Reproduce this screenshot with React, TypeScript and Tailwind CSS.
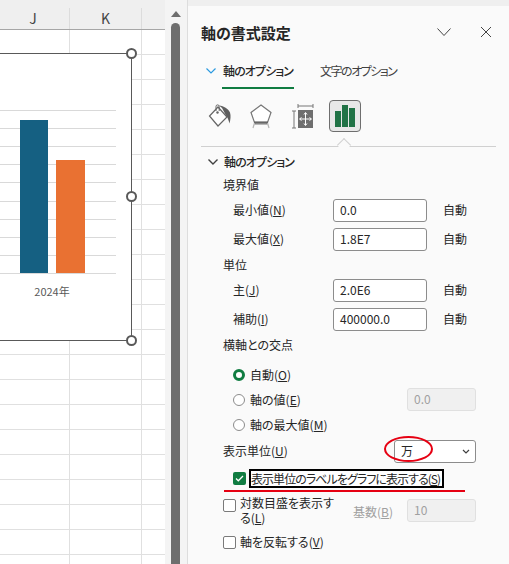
import type { ReactNode } from "react";

const gridLines = [0, 1, 2, 3, 4, 5, 6, 7, 8, 9];
const sheetRows = Array.from({ length: 22 }, (_, i) => i);

function Handle({ className }: { className: string }) {
  return (
    <div
      className={`absolute h-[11px] w-[11px] rounded-full border-2 border-[#595959] bg-white ${className}`}
    />
  );
}

function Sheet() {
  return (
    <div className="relative h-full w-[165px] shrink-0 overflow-hidden bg-white">
      <div className="flex h-[30px] border-b border-[#a6a6a6] bg-[#efefef] pt-[8px] text-[14px] leading-[20px] text-[#444444]">
        <div className="w-[70px] border-r border-[#dcdcdc] pr-[3px] text-center">J</div>
        <div className="w-[72px] border-r border-[#dcdcdc] text-center">K</div>
      </div>
      {sheetRows.map((i) => (
        <div key={i} className="flex h-[25px] border-b border-[#e0e0e0]">
          <div className="w-[70px] border-r border-[#e0e0e0]" />
          <div className="w-[72px] border-r border-[#e0e0e0]" />
        </div>
      ))}
      <div className="absolute left-[-10px] top-[53px] h-[288px] w-[142px] border border-[#595959] bg-white">
        <div className="absolute left-[9px] top-[56px] flex h-[164px] w-[116px] flex-col justify-between">
          {gridLines.map((i) => (
            <div key={i} className="h-px bg-[#d9d9d9]" />
          ))}
          <div className="absolute bottom-[1px] left-[20px] h-[153px] w-[28px] bg-[#156082]" />
          <div className="absolute bottom-[1px] left-[56px] h-[113px] w-[29px] bg-[#e97132]" />
        </div>
        <div className="absolute left-[9px] top-[229px] w-[104px] text-center text-[11px] leading-[16px] text-[#595959]">
          2024年
        </div>
      </div>
      <Handle className="left-[126px] top-[48px]" />
      <Handle className="left-[126px] top-[191px]" />
      <Handle className="left-[126px] top-[335px]" />
    </div>
  );
}

function ScrollBar() {
  return (
    <div className="flex h-full w-[23px] shrink-0 flex-col items-center border-r border-[#dddddd] bg-[#f4f4f4] pr-[1px] pt-[11px]">
      <div className="h-0 w-0 border-x-[5px] border-b-[6px] border-x-transparent border-b-[#6e6e6e]" />
      <div className="mt-[6px] w-[9px] flex-1 rounded-t-[5px] bg-[#6e6e6e]" />
    </div>
  );
}

function Label({ children, className = "" }: { children: ReactNode; className?: string }) {
  return <div className={`whitespace-nowrap text-[12px] leading-[20px] text-[#262626] ${className}`}>{children}</div>;
}

function ValueRow({ label, value, className }: { label: ReactNode; value: string; className: string }) {
  return (
    <div className={`flex h-[23px] items-center ${className}`}>
      <Label className="w-[110px] pb-[1px] pl-[10px]">{label}</Label>
      <div className="flex h-[23px] w-[94px] items-center rounded-[3px] border border-[#8c8c8c] bg-white pb-[2px] pl-[6px] text-[12px] text-[#262626]">
        {value}
      </div>
      <Label className="ml-[16px] pb-[1px]">自動</Label>
    </div>
  );
}

function Radio({ checked }: { checked?: boolean }) {
  return checked ? (
    <div className="h-[12px] w-[12px] shrink-0 rounded-full border-[3px] border-[#107c41] bg-white" />
  ) : (
    <div className="h-[12px] w-[12px] shrink-0 rounded-full border border-[#8c8c8c] bg-white" />
  );
}

function Checkbox() {
  return <div className="h-[13px] w-[13px] shrink-0 rounded-[2px] border border-[#7a7a7a] bg-white" />;
}

function DisabledInput({ value }: { value: string }) {
  return (
    <div className="flex h-[23px] w-[69px] shrink-0 items-center rounded-[3px] border border-[#e0e0e0] bg-[#f0f0f0] pb-[2px] pl-[6px] text-[12px] text-[#a0a0a0]">
      {value}
    </div>
  );
}

function BucketIcon() {
  return (
    <svg width="26" height="26" viewBox="0 0 26 26" fill="none">
      <path d="M11 4 2.5 13 11 23 20 14Z" stroke="#666666" strokeWidth="1.2" fill="#ffffff" />
      <path d="M9 8V3.5a1.6 1.6 0 0 1 3.2 0V8" stroke="#666666" strokeWidth="1" />
      <circle cx="10.5" cy="9.5" r="1.2" fill="#666666" />
      <path d="M12 2.5c5 .5 9 3 11 7 1 3 .5 7-.5 11-1-3-1.500-6-3.500-8L15 5Z" fill="#5f5f5f" />
    </svg>
  );
}

function PentagonIcon() {
  return (
    <svg width="24" height="26" viewBox="0 0 24 26" fill="none">
      <path d="M12 2 22 9.500 18 21H6L2 9.500Z" stroke="#777777" strokeWidth="1.2" fill="#ffffff" />
      <path d="M5 19.500h14" stroke="#666666" strokeWidth="2.200" />
      <path d="m5.500 20-1.500 5M18.500 20l1.500 5" stroke="#b5b5b5" strokeWidth="1.200" />
    </svg>
  );
}

function SizeIcon() {
  return (
    <svg width="24" height="26" viewBox="0 0 24 26" fill="none">
      <path d="M7 1v4M22 1v4M7 3h15M1 8h4M1 25h4M3 8v17" stroke="#777777" strokeWidth="1" />
      <rect x="7" y="7" width="15" height="18" fill="#6e6e6e" />
      <path d="M14.500 10v12M9 16h11" stroke="#ffffff" strokeWidth="1" />
      <path d="m13 11.500 1.500-2 1.500 2M13 20.500l1.500 2 1.500-2M10.500 14.500l-2 1.500 2 1.500M18.500 14.500l2 1.500-2 1.500" stroke="#ffffff" strokeWidth="1" />
    </svg>
  );
}

function BarsIcon() {
  return (
    <svg width="20" height="22" viewBox="0 0 20 22">
      <rect x="0" y="6" width="6" height="16" fill="#217346" />
      <rect x="7" y="0" width="6" height="22" fill="#217346" />
      <rect x="14" y="3" width="6" height="19" fill="#217346" />
    </svg>
  );
}

function Panel() {
  return (
    <div className="mt-[6px] h-[558px] flex-1 overflow-hidden bg-[#fafafa] pl-[13px] pr-[13px]">
      <div className="mt-[15px] flex h-[24px] items-center">
        <div className="flex-1 text-[15px] font-semibold leading-[24px] text-[#262626]">軸の書式設定</div>
        <svg width="16" height="10" viewBox="0 0 16 10" fill="none" className="mb-[3px]">
          <path d="M1.500 1.500 8 8.500l6.500-7" stroke="#444444" strokeWidth="1" />
        </svg>
        <svg width="12" height="12" viewBox="0 0 12 12" fill="none" className="mb-[3px] ml-[28px] mr-[4px]">
          <path d="m1 1 10 10M11 1 1 11" stroke="#444444" strokeWidth="1" />
        </svg>
      </div>

      <div className="mt-[10px] flex h-[34px] items-start pl-[5px]">
        <svg width="10" height="6" viewBox="0 0 10 6" fill="none" className="mt-[13px]">
          <path d="M.5.500 5 5 9.500.500" stroke="#2b9ae0" strokeWidth="1.200" />
        </svg>
        <div className="ml-[6px] flex h-[34px] w-[72px] flex-col whitespace-nowrap border-b-2 border-[#107c41] pt-[6px] text-center text-[12px] font-medium leading-[20px] tracking-[-0.9px] text-[#262626]">
          軸のオプション
        </div>
        <div className="ml-[26px] whitespace-nowrap pt-[6px] text-[12px] leading-[20px] tracking-[-1.5px] text-[#404040]">
          文字のオプション
        </div>
      </div>

      <div className="mt-[11px] flex h-[32px] items-center pl-[6px]">
        <BucketIcon />
        <div className="ml-[16px]"><PentagonIcon /></div>
        <div className="ml-[18px]"><SizeIcon /></div>
        <div className="ml-[14px] flex h-[32px] w-[32px] items-center justify-center rounded-[4px] border border-[#6e6e6e] bg-[#e8e8e8]">
          <BarsIcon />
        </div>
      </div>

      <div className="relative mt-[14px] h-px w-[295px] bg-[#d0d0d0]">
        <div className="absolute left-[138px] top-[-6px] h-[10px] w-[10px] rotate-45 border-l border-t border-[#d0d0d0] bg-[#fafafa]" />
      </div>

      <div className="mt-[5px] flex h-[20px] items-center pl-[7px]">
        <svg width="10" height="6" viewBox="0 0 10 6" fill="none">
          <path d="M.5.500 5 5 9.500.500" stroke="#404040" strokeWidth="1.400" />
        </svg>
        <Label className="ml-[6px] font-medium tracking-[-0.9px]">軸のオプション</Label>
      </div>

      <div className="pl-[22px] pr-[20px]">
        <Label className="mt-[3px]">境界値</Label>
        <ValueRow className="mt-[4px]" label={<>最小値(<u>N</u>)</>} value="0.0" />
        <ValueRow className="mt-[6px]" label={<>最大値(<u>X</u>)</>} value="1.8E7" />
        <Label className="mt-[4px]">単位</Label>
        <ValueRow className="mt-[4px]" label={<>主(<u>J</u>)</>} value="2.0E6" />
        <ValueRow className="mt-[6px]" label={<>補助(<u>I</u>)</>} value="400000.0" />
        <Label className="mt-[4px]">横軸との交点</Label>

        <div className="mt-[10px] flex h-[20px] items-center gap-[5px] pl-[10px]">
          <Radio checked />
          <Label>自動(<u>O</u>)</Label>
        </div>
        <div className="mt-[3px] flex h-[23px] items-center gap-[5px] pl-[10px]">
          <Radio />
          <Label className="flex-1">軸の値(<u>E</u>)</Label>
          <DisabledInput value="0.0" />
        </div>
        <div className="mt-[4px] flex h-[20px] items-center gap-[5px] pl-[10px]">
          <Radio />
          <Label>軸の最大値(<u>M</u>)</Label>
        </div>

        <div className="relative mt-[5px] flex h-[23px] items-center">
          <Label className="flex-1 pb-[1px]">表示単位(<u>U</u>)</Label>
          <div className="flex h-[23px] w-[82px] items-center justify-between rounded-[3px] border border-[#8c8c8c] bg-white pb-[2px] pl-[6px] pr-[5px] text-[12px] text-[#262626]">
            万
            <svg width="8" height="5" viewBox="0 0 8 5" fill="none" className="mt-[2px]">
              <path d="m1 1 3 3 3-3" stroke="#404040" strokeWidth="1.200" />
            </svg>
          </div>
          <div className="absolute left-[161px] top-[-4px] h-[26px] w-[49px] rounded-[50%] border-2 border-[#e60012]" />
        </div>

        <div className="relative mt-[6px] flex h-[19px] items-center pl-[10px]">
          <div className="flex h-[13px] w-[13px] shrink-0 items-center justify-center rounded-[2px] bg-[#107c41]">
            <svg width="9" height="7" viewBox="0 0 9 7" fill="none">
              <path d="m1 3.500 2.300 2.300L8 1" stroke="#ffffff" strokeWidth="1.300" />
            </svg>
          </div>
          <div className="ml-[3px] h-[19px] w-[195px] whitespace-nowrap border-2 border-black bg-white text-[12px] leading-[15px] tracking-[-0.95px] text-[#262626]">
            表示単位のラベルをグラフに表示する(<u>S</u>)
          </div>
          <div className="absolute left-[1px] top-[21px] h-[2px] w-[241px] bg-[#e60012]" />
        </div>

        <div className="mt-[11px] flex items-start">
          <Checkbox />
          <div className="-mt-[4px] ml-[4px] w-[96px] whitespace-nowrap text-[12px] leading-[15px] text-[#262626]">
            <div>対数目盛を表示す</div>
            <div>る(<u>L</u>)</div>
          </div>
          <div className="ml-[17px] mt-[3px] w-[54px] whitespace-nowrap text-[12px] leading-[20px] text-[#a0a0a0]">
            基数(<u>B</u>)
          </div>
          <DisabledInput value="10" />
        </div>

        <div className="mt-[7px] flex h-[20px] items-center">
          <Checkbox />
          <Label className="ml-[4px]">軸を反転する(<u>V</u>)</Label>
        </div>
      </div>
    </div>
  );
}

export default function App() {
  return (
    <div className="flex h-[564px] w-[509px] overflow-hidden bg-[#efefef] font-['Noto_Sans_CJK_JP','Noto_Sans',sans-serif] [font-feature-settings:'palt']">
      <Sheet />
      <ScrollBar />
      <Panel />
    </div>
  );
}
